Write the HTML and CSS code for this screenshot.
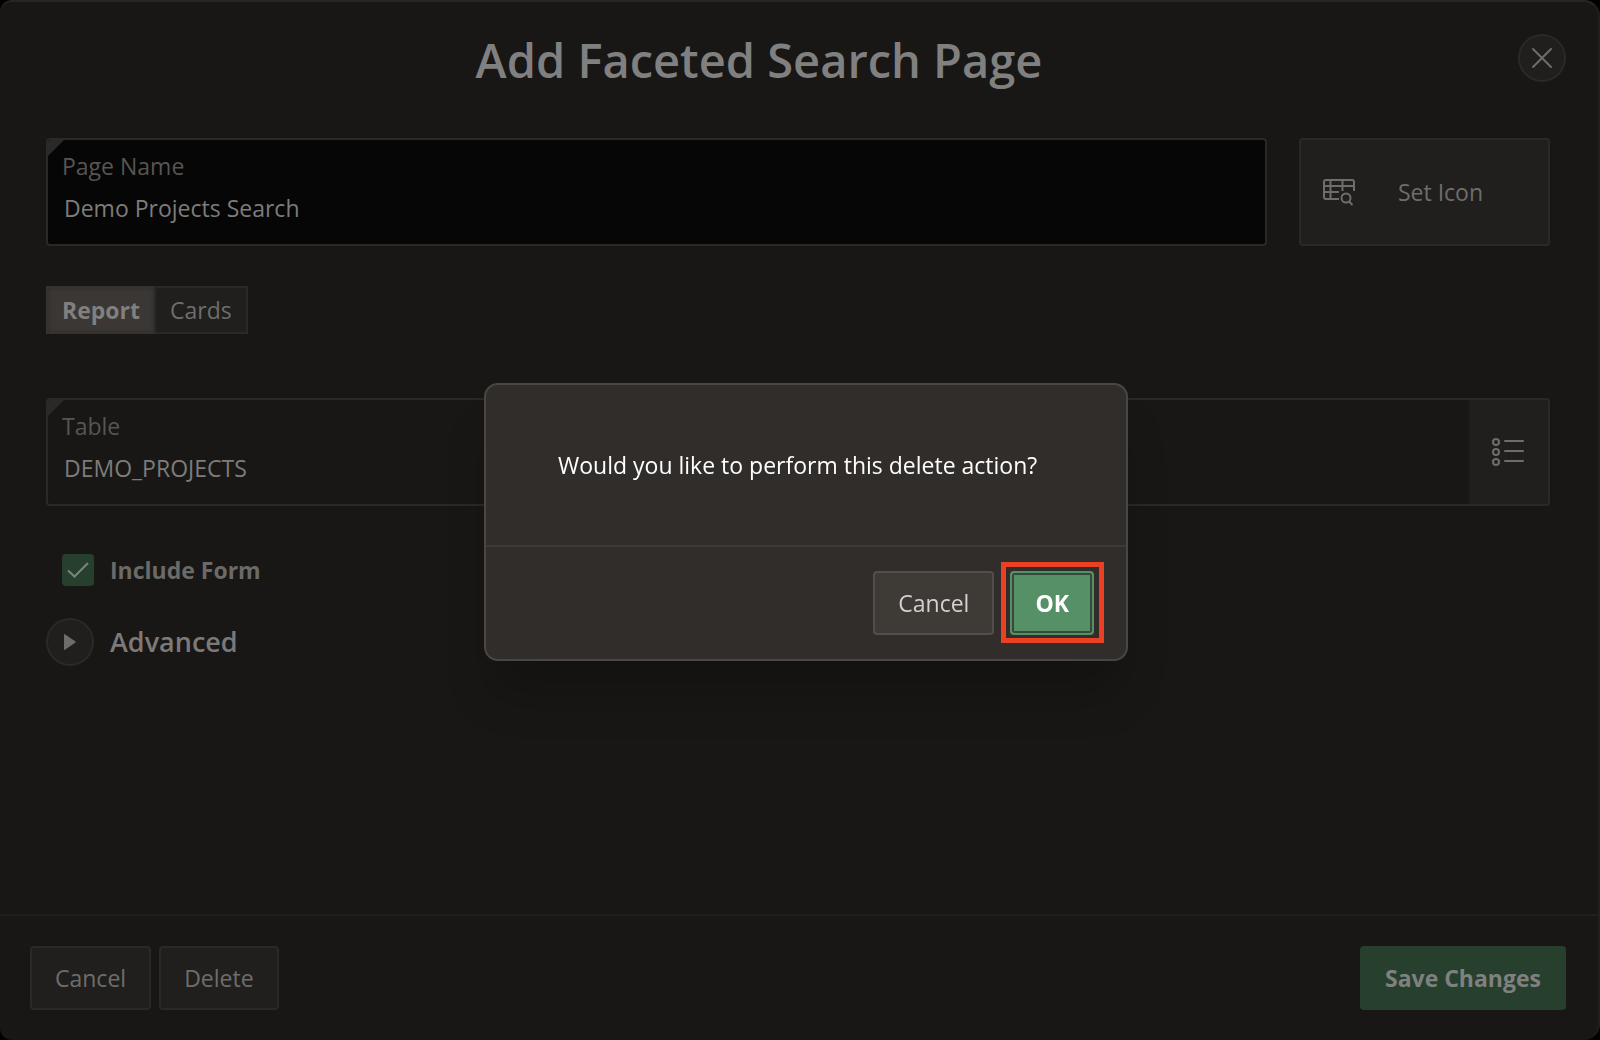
FILE: index.html
```html
<!DOCTYPE html>
<html lang="en">
<head>
<meta charset="utf-8">
<meta name="viewport" content="width=device-width, initial-scale=1">
<title>Add Faceted Search Page</title>
<link rel="stylesheet" href="styles.css">
</head>
<body>
<main class="page">
  <header class="page-header">
    <h1 class="page-title">Add Faceted Search Page</h1>
    <button class="round-button close-button" type="button" aria-label="Close">
      <svg width="20" height="20" viewBox="0 0 20 20" fill="none" stroke="currentColor" stroke-width="2" stroke-linecap="round"><path d="M1 1l18 18M19 1L1 19"/></svg>
    </button>
  </header>

  <form class="page-body">
    <div class="name-row">
      <div class="field field-editable">
        <label class="field-label" for="page-name">Page Name</label>
        <input class="field-input" id="page-name" type="text" value="Demo Projects Search">
      </div>
      <button class="icon-picker" type="button">
        <svg width="32" height="26" viewBox="0 0 32 26" fill="none" stroke="currentColor" stroke-width="2"><path d="M31 12V3a2 2 0 0 0-2-2H3a2 2 0 0 0-2 2v15a2 2 0 0 0 2 2h13M1 7h30M1 13h15M7.500 1v19M19.500 1v11"/><circle cx="23" cy="19" r="4.500"/><path d="M26 22.500l3.500 3.500"/></svg>
        <span class="icon-picker-text">Set Icon</span>
      </button>
    </div>

    <div class="segments">
      <button class="segment segment-active" type="button" aria-pressed="true">Report</button>
      <button class="segment" type="button" aria-pressed="false">Cards</button>
    </div>

    <div class="field field-lookup">
      <div class="field-main">
        <label class="field-label" for="table-name">Table</label>
        <input class="field-input" id="table-name" type="text" value="DEMO_PROJECTS">
      </div>
      <button class="lookup-button" type="button" aria-label="Choose table">
        <svg width="32" height="28" viewBox="0 0 32 28" fill="none" stroke="currentColor" stroke-width="2"><circle cx="4" cy="4" r="3"/><circle cx="4" cy="14" r="3"/><circle cx="4" cy="24" r="3"/><path stroke-linecap="round" d="M13 3h18M13 13h18M13 23h18"/></svg>
      </button>
    </div>

    <div class="check-row">
      <span class="check-box">
        <input class="check-input" id="include-form" type="checkbox" checked>
        <svg class="check-mark" width="22" height="16" viewBox="0 0 22 16" fill="none" stroke="currentColor" stroke-width="2"><path d="M1 8.500l6.500 6L21 1"/></svg>
      </span>
      <label class="check-label" for="include-form">Include Form</label>
    </div>

    <div class="advanced">
      <button class="round-button" type="button" aria-labelledby="advanced-title" aria-expanded="false">
        <svg width="12" height="16" viewBox="0 0 12 16"><path fill="currentColor" stroke="currentColor" stroke-width="1" stroke-linejoin="round" d="M.5.5v15L11.500 8z"/></svg>
      </button>
      <h2 class="advanced-title" id="advanced-title">Advanced</h2>
    </div>
  </form>

  <footer class="page-footer">
    <button class="button" type="button">Cancel</button>
    <button class="button" type="button">Delete</button>
    <button class="button button-save" type="button">Save Changes</button>
  </footer>
</main>

<div class="overlay">
  <section class="confirm" role="alertdialog" aria-modal="true" aria-labelledby="confirm-text">
    <p class="confirm-text" id="confirm-text">Would you like to perform this delete action?</p>
    <div class="confirm-actions">
      <button class="button button-light" type="button">Cancel</button>
      <span class="highlight"><button class="button button-ok" type="button">OK</button></span>
    </div>
  </section>
</div>
</body>
</html>
```
FILE: styles.css
```css
* {
  box-sizing: border-box;
}

body {
  margin: 0;
  background: #000;
  color: #6e6d6b;
  font-family: "Open Sans", "Noto Sans", sans-serif;
  font-size: 23px;
  line-height: 32px;
}

button,
input {
  font: inherit;
  color: inherit;
}

button {
  display: flex;
  align-items: center;
  justify-content: center;
  margin: 0;
  padding: 0;
  border: 2px solid #2a2928;
  background: #201f1d;
}

svg {
  display: block;
  flex: none;
  overflow: visible;
}

.page {
  display: flex;
  flex-direction: column;
  min-height: 100vh;
  background: #181715;
  border-top: 2px solid #272624;
  border-right: 2px solid #21201e;
  border-radius: 12px 16px 16px 12px;
}

.page-header {
  display: flex;
  align-items: flex-start;
  padding: 26px 32px 0 0;
}

.page-title {
  flex: 1;
  margin: 0;
  color: #808080;
  font-size: 47px;
  font-weight: 600;
  line-height: 64px;
  text-align: center;
}

.round-button {
  width: 48px;
  height: 48px;
  border-radius: 50%;
}

.close-button {
  margin-top: 6px;
}

.page-body {
  flex: 1;
  padding: 46px 48px 0 46px;
}

.name-row {
  display: grid;
  grid-template-columns: 1fr 251px;
  gap: 32px;
}

.field {
  position: relative;
  height: 108px;
  border: 2px solid #2a2928;
  border-radius: 4px;
  overflow: hidden;
}

.field::before {
  content: "";
  position: absolute;
  top: 0;
  left: 0;
  width: 16px;
  height: 16px;
  background: #2a2928;
  clip-path: polygon(0 0, 100% 0, 0 100%);
}

.field-editable {
  padding: 10px 14px 0;
  background: #060606;
}

.field-lookup {
  display: flex;
  margin-top: 64px;
}

.field-main {
  flex: 1;
  padding: 10px 14px 0;
}

.field-label {
  display: block;
  color: #565553;
}

.field-input {
  display: block;
  width: 100%;
  height: 32px;
  margin-top: 10px;
  padding: 0 2px;
  border: 0;
  outline: 0;
  background: transparent;
  color: #7d7c7b;
}

.icon-picker {
  justify-content: flex-start;
  padding: 0 22px;
  border-radius: 4px;
}

.icon-picker-text {
  flex: 1;
  text-align: center;
}

.segments {
  display: flex;
  margin-top: 40px;
}

.segment {
  height: 48px;
  padding: 0 14px;
}

.segment-active {
  border-color: #353330;
  border-right-width: 0;
  background: #3b3734;
  box-shadow: inset 0 0 4px #2c2a28;
  color: #808080;
  font-weight: 700;
}

.lookup-button {
  width: 80px;
  padding-right: 2px;
  border-width: 0 0 0 2px;
  border-color: #1b1a18;
}

.check-row {
  display: flex;
  align-items: center;
  gap: 16px;
  margin: 48px 0 0 16px;
}

.check-box {
  display: grid;
  width: 32px;
  height: 32px;
}

.check-input {
  grid-area: 1 / 1;
  appearance: none;
  width: 32px;
  height: 32px;
  margin: 0;
  border-radius: 4px;
  background: #26402d;
}

.check-mark {
  grid-area: 1 / 1;
  place-self: center;
  color: #808080;
  pointer-events: none;
}

.check-label {
  color: #6b6a68;
  font-weight: 700;
}

.advanced {
  display: flex;
  align-items: center;
  gap: 16px;
  margin-top: 32px;
}

.advanced-title {
  margin: 0;
  color: #7b7a79;
  font-size: 27px;
  font-weight: 600;
}

.page-footer {
  display: flex;
  gap: 8px;
  padding: 30px 32px 30px 30px;
  border-top: 2px solid #201f1d;
}

.button {
  height: 64px;
  padding: 0 23px;
  border-radius: 4px;
}

.button-save {
  margin-left: auto;
  border-color: #26402d;
  background: #26402d;
  color: #808080;
  font-weight: 700;
}

.overlay {
  position: fixed;
  inset: 0;
  display: flex;
  align-items: center;
  justify-content: center;
  padding: 4px 0 0 12px;
}

.confirm {
  width: 644px;
  border: 2px solid #4a4641;
  border-radius: 14px;
  background: #312d2a;
  box-shadow: 0 40px 48px -8px rgba(0, 0, 0, 0.2);
}

.confirm-text {
  margin: 0;
  padding: 64px 72px;
  color: #fff;
  white-space: nowrap;
}

.confirm-actions {
  display: flex;
  align-items: center;
  justify-content: flex-end;
  gap: 7px;
  padding: 15px 22px 16px;
  border-top: 2px solid #3d3936;
}

.button-light {
  border-color: #524f4a;
  background: #3e3a36;
  color: #d3d1cf;
}

.highlight {
  padding: 4px 5px 3px 4px;
  border: 5px solid #ec4025;
}

.button-ok {
  min-width: 83px;
  border-color: #569067;
  background: #569067;
  box-shadow: inset 0 0 0 2px #36493a;
  color: #fff;
  font-weight: 700;
}
```
